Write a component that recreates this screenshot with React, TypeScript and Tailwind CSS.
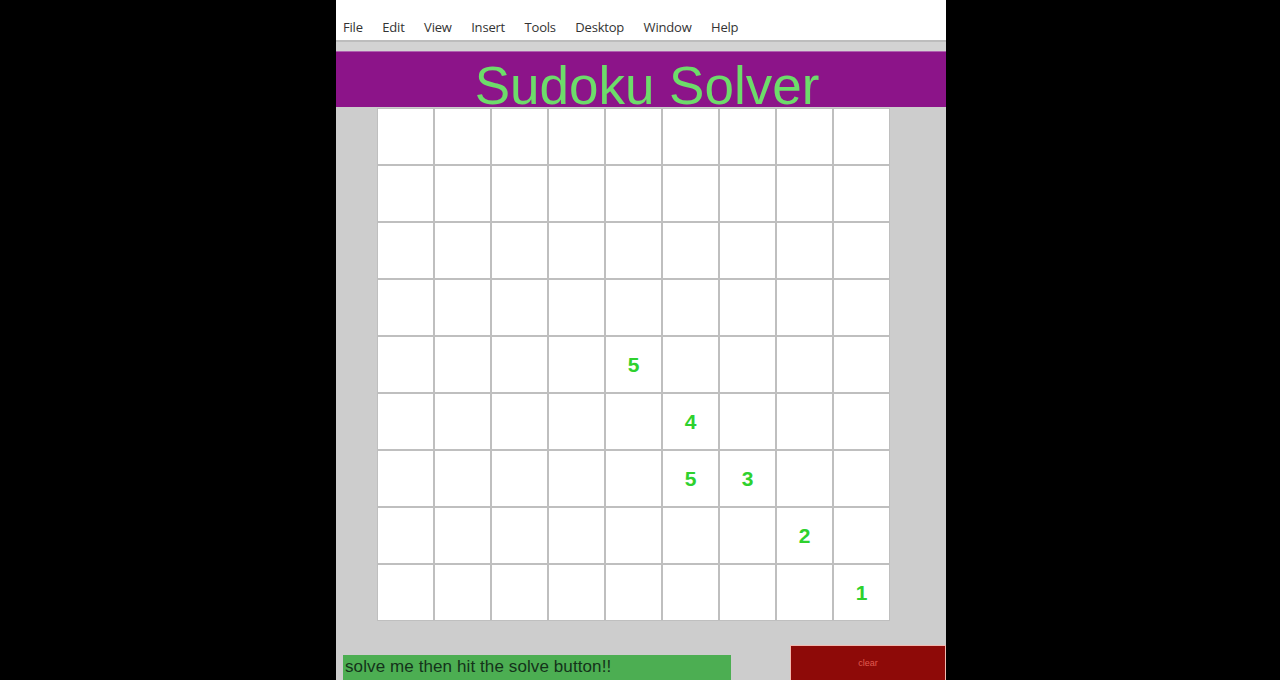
import React from "react";

const givens: Record<string, string> = {
  "4-4": "5",
  "5-5": "4",
  "6-5": "5",
  "6-6": "3",
  "7-7": "2",
  "8-8": "1",
};

const menu = ["File", "Edit", "View", "Insert", "Tools", "Desktop", "Window", "Help"];

export default function App() {
  return (
    <div className="w-[1280px] h-[680px] bg-black flex justify-center overflow-hidden">
      <div
        className="w-[610px] h-[680px] ml-[2px] bg-[#cdcdcd] flex flex-col overflow-hidden"
        style={{ fontFamily: '"Liberation Sans", Arial, sans-serif' }}
      >
        <div
          className="h-[40px] shrink-0 bg-white flex items-center pl-[7px] gap-[19.5px] text-[13px] text-[#333] pt-[14px]"
          style={{ fontFamily: '"Open Sans", "Liberation Sans", sans-serif' }}
        >
          {menu.map((m) => (
            <span key={m} className="leading-none tracking-[-0.2px]">
              {m}
            </span>
          ))}
        </div>
        <div className="h-[11px] shrink-0 bg-[#d3d3d3] border-t-[2px] border-[#bdbdbd]" />
        <div className="h-[56px] shrink-0 bg-[#8c1489] border-t border-[#b060b0] flex items-start justify-center pt-[13px]">
          <span className="text-[53px] leading-[42px] text-[#6ddc6a] ml-[12px]">
            Sudoku Solver
          </span>
        </div>
        <div className="flex-1 flex flex-col">
          <div className="ml-[41px] mt-[1px] w-[513px] bg-[#bfbfbf] p-[1px] grid grid-cols-9 gap-[2px]">
            {Array.from({ length: 81 }).map((_, i) => {
              const r = Math.floor(i / 9);
              const c = i % 9;
              const v = givens[`${r}-${c}`];
              return (
                <div
                  key={i}
                  className="h-[55px] bg-white flex items-center justify-center text-[21px] font-bold text-[#2ed12e]"
                >
                  {v ?? ""}
                </div>
              );
            })}
          </div>
          <div className="flex items-start">
            <div className="ml-[7px] mt-[34px] w-[388px] h-[30px] bg-[#4cae52] text-[#14331a] text-[17px] leading-none pt-[3px] pl-[2px] tracking-[0.1px]">
              solve me then hit the solve button!!
            </div>
            <div className="ml-[59px] mt-[24px] w-[156px] h-[40px] bg-[#8e0a08] border border-[#f2b8b0] flex justify-center pt-[13px]">
              <span className="text-[9px] leading-none text-[#e25a50]">clear</span>
            </div>
          </div>
        </div>
      </div>
    </div>
  );
}
